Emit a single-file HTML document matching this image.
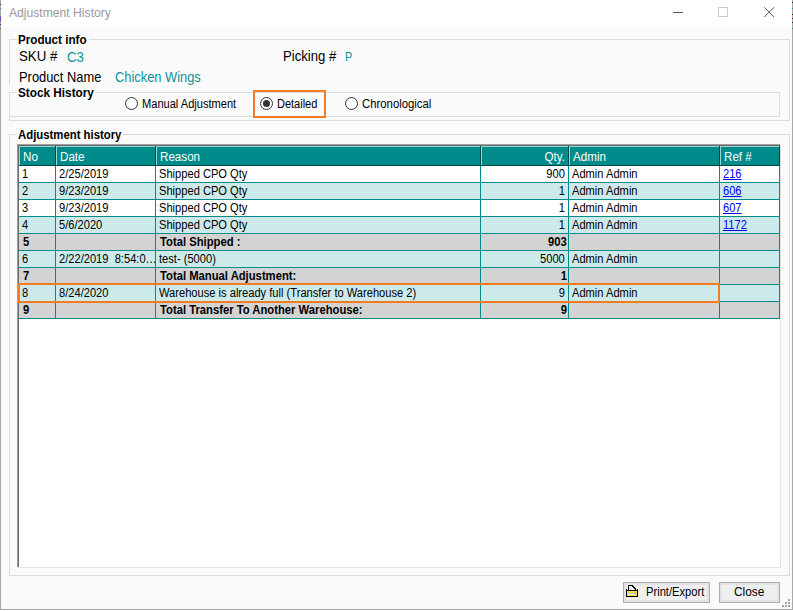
<!DOCTYPE html>
<html><head><meta charset="utf-8">
<style>
*{margin:0;padding:0;box-sizing:border-box}
html,body{width:793px;height:611px;overflow:hidden;background:#fafafa;font-family:"Liberation Sans",sans-serif;color:#000}
.a{position:absolute;white-space:nowrap}
#title{left:0;top:0;width:793px;height:28px;background:#fff}
.t{position:absolute;white-space:nowrap;line-height:1;transform-origin:0 0}
.radio{position:absolute;width:13px;height:13px;border:1px solid #333;border-radius:50%;background:#fff}
.radio.on::after{content:"";position:absolute;left:2px;top:2px;width:7px;height:7px;border-radius:50%;background:#333}
.btn{position:absolute;height:21px;background:#efefef;border:1px solid #adadad;box-shadow:inset 0 0 0 2px #e3e3e3}
.grip{position:absolute;width:2px;height:2px;background:#a8a8a8}
</style></head><body>
<div class="a" id="title"></div>
<!-- title buttons -->
<div class="a" style="left:673px;top:12px;width:10px;height:1px;background:#555"></div>
<div class="a" style="left:718px;top:7px;width:10px;height:10px;border:1px solid #ccc"></div>
<svg class="a" style="left:763px;top:6px" width="13" height="13" viewBox="0 0 13 13"><path d="M1.3 1.3L11 11M11 1.3L1.3 11" stroke="#5a5a5a" stroke-width="1" fill="none"/></svg>
<!-- window border -->
<div class="a" style="left:0;top:0;width:1px;height:610px;background:#a8a8a8"></div>
<div class="a" style="left:792px;top:0;width:1px;height:610px;background:#a8a8a8"></div>
<div class="a" style="left:0;top:610px;width:793px;height:1px;background:#fff"></div>
<div class="a" style="left:0;top:609px;width:793px;height:1px;background:#a8a8a8"></div>

<div class="a" style="left:9px;top:39px;width:8px;height:1px;background:#dcdcdc"></div><div class="a" style="left:89px;top:39px;width:701px;height:1px;background:#dcdcdc"></div><div class="a" style="left:9px;top:120px;width:781px;height:1px;background:#dcdcdc"></div><div class="a" style="left:9px;top:39px;width:1px;height:82px;background:#dcdcdc"></div><div class="a" style="left:789px;top:39px;width:1px;height:82px;background:#dcdcdc"></div><div class="a" style="left:9px;top:85px;width:771px;height:32px;background:#fafafa"></div><div class="a" style="left:9px;top:92px;width:8px;height:1px;background:#dcdcdc"></div><div class="a" style="left:96px;top:92px;width:684px;height:1px;background:#dcdcdc"></div><div class="a" style="left:9px;top:116px;width:771px;height:1px;background:#dcdcdc"></div><div class="a" style="left:9px;top:92px;width:1px;height:25px;background:#dcdcdc"></div><div class="a" style="left:779px;top:92px;width:1px;height:25px;background:#dcdcdc"></div><div class="a" style="left:9px;top:134px;width:8px;height:1px;background:#dcdcdc"></div><div class="a" style="left:123px;top:134px;width:667px;height:1px;background:#dcdcdc"></div><div class="a" style="left:9px;top:575px;width:781px;height:1px;background:#dcdcdc"></div><div class="a" style="left:9px;top:134px;width:1px;height:442px;background:#dcdcdc"></div><div class="a" style="left:789px;top:134px;width:1px;height:442px;background:#dcdcdc"></div>


<!-- Stock history group -->

<div class="radio" style="left:125px;top:97px"></div>
<div class="a" style="left:253px;top:90px;width:73px;height:28px;border:2px solid #f47b20"></div>
<div class="radio on" style="left:260px;top:97px"></div>
<div class="radio" style="left:345px;top:97px"></div>

<!-- Adjustment history group -->


<div class="a" style="left:17px;top:144px;width:764px;height:424px;background:#fff"></div>
<div class="a" style="left:17px;top:144px;width:764px;height:1px;background:#a0a0a0"></div>
<div class="a" style="left:17px;top:145px;width:763px;height:1px;background:#696969"></div>
<div class="a" style="left:17px;top:144px;width:1px;height:424px;background:#a0a0a0"></div>
<div class="a" style="left:18px;top:145px;width:1px;height:423px;background:#696969"></div>
<div class="a" style="left:780px;top:144px;width:1px;height:424px;background:#e3e3e3"></div>
<div class="a" style="left:17px;top:567px;width:764px;height:1px;background:#e3e3e3"></div>
<div class="a" style="left:19px;top:146px;width:761px;height:20px;background:#008b8b"></div>
<div class="a" style="left:19px;top:146px;width:761px;height:1px;background:#9ed6d6"></div>
<div class="a" style="left:19px;top:165px;width:761px;height:1px;background:#004848"></div>
<div class="a" style="left:19px;top:146px;width:1px;height:19px;background:#9ed6d6"></div>
<div class="a" style="left:55px;top:146px;width:1px;height:20px;background:#004848"></div>
<div class="a" style="left:56px;top:146px;width:1px;height:19px;background:#9ed6d6"></div>
<div class="a" style="left:155px;top:146px;width:1px;height:20px;background:#004848"></div>
<div class="a" style="left:156px;top:146px;width:1px;height:19px;background:#9ed6d6"></div>
<div class="a" style="left:480px;top:146px;width:1px;height:20px;background:#004848"></div>
<div class="a" style="left:481px;top:146px;width:1px;height:19px;background:#9ed6d6"></div>
<div class="a" style="left:568px;top:146px;width:1px;height:20px;background:#004848"></div>
<div class="a" style="left:569px;top:146px;width:1px;height:19px;background:#9ed6d6"></div>
<div class="a" style="left:719px;top:146px;width:1px;height:20px;background:#004848"></div>
<div class="a" style="left:720px;top:146px;width:1px;height:19px;background:#9ed6d6"></div>
<div class="a" style="left:779px;top:146px;width:1px;height:20px;background:#004848"></div>
<div class="a" style="left:19px;top:166px;width:760px;height:16px;background:#fff"></div>
<div class="a" style="left:19px;top:182px;width:761px;height:1px;background:#008b8b"></div>
<div class="a" style="left:19px;top:183px;width:760px;height:16px;background:#cdeaea"></div>
<div class="a" style="left:19px;top:199px;width:761px;height:1px;background:#008b8b"></div>
<div class="a" style="left:19px;top:200px;width:760px;height:16px;background:#fff"></div>
<div class="a" style="left:19px;top:216px;width:761px;height:1px;background:#008b8b"></div>
<div class="a" style="left:19px;top:217px;width:760px;height:16px;background:#cdeaea"></div>
<div class="a" style="left:19px;top:233px;width:761px;height:1px;background:#008b8b"></div>
<div class="a" style="left:19px;top:234px;width:760px;height:16px;background:#d3d3d3"></div>
<div class="a" style="left:19px;top:250px;width:761px;height:1px;background:#008b8b"></div>
<div class="a" style="left:19px;top:251px;width:760px;height:16px;background:#cdeaea"></div>
<div class="a" style="left:19px;top:267px;width:761px;height:1px;background:#008b8b"></div>
<div class="a" style="left:19px;top:268px;width:760px;height:16px;background:#d3d3d3"></div>
<div class="a" style="left:19px;top:284px;width:761px;height:1px;background:#008b8b"></div>
<div class="a" style="left:19px;top:285px;width:760px;height:16px;background:#cdeaea"></div>
<div class="a" style="left:19px;top:301px;width:761px;height:1px;background:#008b8b"></div>
<div class="a" style="left:19px;top:302px;width:760px;height:16px;background:#d3d3d3"></div>
<div class="a" style="left:19px;top:318px;width:761px;height:1px;background:#008b8b"></div>
<div class="a" style="left:55px;top:166px;width:1px;height:153px;background:#008b8b"></div>
<div class="a" style="left:155px;top:166px;width:1px;height:153px;background:#008b8b"></div>
<div class="a" style="left:480px;top:166px;width:1px;height:153px;background:#008b8b"></div>
<div class="a" style="left:568px;top:166px;width:1px;height:153px;background:#008b8b"></div>
<div class="a" style="left:719px;top:166px;width:1px;height:153px;background:#008b8b"></div>
<div class="a" style="left:779px;top:166px;width:1px;height:153px;background:#008b8b"></div>
<div class="t" style="left:23px;top:151px;font-size:12.5px;font-weight:normal;color:#fff;transform:scaleX(0.93);">No</div>
<div class="t" style="left:60px;top:151px;font-size:12.5px;font-weight:normal;color:#fff;transform:scaleX(0.93);">Date</div>
<div class="t" style="left:160px;top:151px;font-size:12.5px;font-weight:normal;color:#fff;transform:scaleX(0.93);">Reason</div>
<div class="t" style="right:228px;top:151px;font-size:12.5px;font-weight:normal;color:#fff;transform:scaleX(0.93);transform-origin:100% 0;">Qty.</div>
<div class="t" style="left:573px;top:151px;font-size:12.5px;font-weight:normal;color:#fff;transform:scaleX(0.93);">Admin</div>
<div class="t" style="left:724px;top:151px;font-size:12.5px;font-weight:normal;color:#fff;transform:scaleX(0.93);">Ref #</div>
<div class="t" style="left:22px;top:168px;font-size:12.5px;font-weight:normal;color:#000;transform:scaleX(0.89);">1</div>
<div class="t" style="left:59px;top:168px;font-size:12.5px;font-weight:normal;color:#000;transform:scaleX(0.89);">2/25/2019</div>
<div class="t" style="left:159px;top:168px;font-size:12.5px;font-weight:normal;color:#000;transform:scaleX(0.89);">Shipped CPO Qty</div>
<div class="t" style="right:228px;top:168px;font-size:12.5px;font-weight:normal;color:#000;transform:scaleX(0.89);transform-origin:100% 0;">900</div>
<div class="t" style="left:572px;top:168px;font-size:12.5px;font-weight:normal;color:#000;transform:scaleX(0.89);">Admin Admin</div>
<div class="t" style="left:723px;top:168px;font-size:12.5px;font-weight:normal;color:#00f;transform:scaleX(0.89);text-decoration:underline;">216</div>
<div class="t" style="left:22px;top:185px;font-size:12.5px;font-weight:normal;color:#000;transform:scaleX(0.89);">2</div>
<div class="t" style="left:59px;top:185px;font-size:12.5px;font-weight:normal;color:#000;transform:scaleX(0.89);">9/23/2019</div>
<div class="t" style="left:159px;top:185px;font-size:12.5px;font-weight:normal;color:#000;transform:scaleX(0.89);">Shipped CPO Qty</div>
<div class="t" style="right:228px;top:185px;font-size:12.5px;font-weight:normal;color:#000;transform:scaleX(0.89);transform-origin:100% 0;">1</div>
<div class="t" style="left:572px;top:185px;font-size:12.5px;font-weight:normal;color:#000;transform:scaleX(0.89);">Admin Admin</div>
<div class="t" style="left:723px;top:185px;font-size:12.5px;font-weight:normal;color:#00f;transform:scaleX(0.89);text-decoration:underline;">606</div>
<div class="t" style="left:22px;top:202px;font-size:12.5px;font-weight:normal;color:#000;transform:scaleX(0.89);">3</div>
<div class="t" style="left:59px;top:202px;font-size:12.5px;font-weight:normal;color:#000;transform:scaleX(0.89);">9/23/2019</div>
<div class="t" style="left:159px;top:202px;font-size:12.5px;font-weight:normal;color:#000;transform:scaleX(0.89);">Shipped CPO Qty</div>
<div class="t" style="right:228px;top:202px;font-size:12.5px;font-weight:normal;color:#000;transform:scaleX(0.89);transform-origin:100% 0;">1</div>
<div class="t" style="left:572px;top:202px;font-size:12.5px;font-weight:normal;color:#000;transform:scaleX(0.89);">Admin Admin</div>
<div class="t" style="left:723px;top:202px;font-size:12.5px;font-weight:normal;color:#00f;transform:scaleX(0.89);text-decoration:underline;">607</div>
<div class="t" style="left:22px;top:219px;font-size:12.5px;font-weight:normal;color:#000;transform:scaleX(0.89);">4</div>
<div class="t" style="left:59px;top:219px;font-size:12.5px;font-weight:normal;color:#000;transform:scaleX(0.89);">5/6/2020</div>
<div class="t" style="left:159px;top:219px;font-size:12.5px;font-weight:normal;color:#000;transform:scaleX(0.89);">Shipped CPO Qty</div>
<div class="t" style="right:228px;top:219px;font-size:12.5px;font-weight:normal;color:#000;transform:scaleX(0.89);transform-origin:100% 0;">1</div>
<div class="t" style="left:572px;top:219px;font-size:12.5px;font-weight:normal;color:#000;transform:scaleX(0.89);">Admin Admin</div>
<div class="t" style="left:723px;top:219px;font-size:12.5px;font-weight:normal;color:#00f;transform:scaleX(0.89);text-decoration:underline;">1172</div>
<div class="t" style="left:22.5px;top:236px;font-size:12.5px;font-weight:bold;color:#000;transform:scaleX(0.9);">5</div>
<div class="t" style="left:159.5px;top:236px;font-size:12.5px;font-weight:bold;color:#000;transform:scaleX(0.9);">Total Shipped :</div>
<div class="t" style="right:226.5px;top:236px;font-size:12.5px;font-weight:bold;color:#000;transform:scaleX(0.9);transform-origin:100% 0;">903</div>
<div class="t" style="left:22px;top:253px;font-size:12.5px;font-weight:normal;color:#000;transform:scaleX(0.89);">6</div>
<div class="t" style="left:59px;top:253px;font-size:12.5px;font-weight:normal;color:#000;transform:scaleX(0.89);">2/22/2019&nbsp; 8:54:0…</div>
<div class="t" style="left:159px;top:253px;font-size:12.5px;font-weight:normal;color:#000;transform:scaleX(0.89);">test- (5000)</div>
<div class="t" style="right:228px;top:253px;font-size:12.5px;font-weight:normal;color:#000;transform:scaleX(0.89);transform-origin:100% 0;">5000</div>
<div class="t" style="left:572px;top:253px;font-size:12.5px;font-weight:normal;color:#000;transform:scaleX(0.89);">Admin Admin</div>
<div class="t" style="left:22.5px;top:270px;font-size:12.5px;font-weight:bold;color:#000;transform:scaleX(0.9);">7</div>
<div class="t" style="left:159.5px;top:270px;font-size:12.5px;font-weight:bold;color:#000;transform:scaleX(0.9);">Total Manual Adjustment:</div>
<div class="t" style="right:226.5px;top:270px;font-size:12.5px;font-weight:bold;color:#000;transform:scaleX(0.9);transform-origin:100% 0;">1</div>
<div class="t" style="left:22px;top:287px;font-size:12.5px;font-weight:normal;color:#000;transform:scaleX(0.89);">8</div>
<div class="t" style="left:59px;top:287px;font-size:12.5px;font-weight:normal;color:#000;transform:scaleX(0.89);">8/24/2020</div>
<div class="t" style="left:159px;top:287px;font-size:12.5px;font-weight:normal;color:#000;transform:scaleX(0.89);">Warehouse is already full (Transfer to Warehouse 2)</div>
<div class="t" style="right:228px;top:287px;font-size:12.5px;font-weight:normal;color:#000;transform:scaleX(0.89);transform-origin:100% 0;">9</div>
<div class="t" style="left:572px;top:287px;font-size:12.5px;font-weight:normal;color:#000;transform:scaleX(0.89);">Admin Admin</div>
<div class="t" style="left:22.5px;top:304px;font-size:12.5px;font-weight:bold;color:#000;transform:scaleX(0.9);">9</div>
<div class="t" style="left:159.5px;top:304px;font-size:12.5px;font-weight:bold;color:#000;transform:scaleX(0.9);">Total Transfer To Another Warehouse:</div>
<div class="t" style="right:226.5px;top:304px;font-size:12.5px;font-weight:bold;color:#000;transform:scaleX(0.9);transform-origin:100% 0;">9</div>
<div class="a" style="left:18px;top:283px;width:702px;height:20px;border:2px solid #f47b20"></div>

<!-- buttons -->
<div class="btn" style="left:623px;top:582px;width:87px"></div>
<div class="btn" style="left:719px;top:582px;width:61px"></div>
<svg class="a" style="left:626px;top:585px" width="12" height="12" viewBox="0 0 12 12" shape-rendering="crispEdges">
<rect x="0" y="4" width="12" height="8" fill="#000"/>
<path d="M2 0h5v1h1v1h1v1h1v3H2z" fill="#000"/>
<path d="M3 1h3v1h1v1h1v1h1v1H3z" fill="#e8e8f8"/>
<rect x="1" y="6" width="10" height="5" fill="#ffd940"/>
<rect x="2" y="8" width="7" height="2" fill="#f8f8f8"/>
<rect x="2" y="8" width="7" height="1" fill="#c0c0d8"/>
<rect x="9" y="8" width="1" height="1" fill="#22dd22"/>
<rect x="1" y="4" width="1" height="1" fill="#ffd940"/>
<rect x="10" y="4" width="1" height="1" fill="#ffd940"/>
</svg>

<div class="grip" style="left:788px;top:599px"></div>
<div class="grip" style="left:785px;top:602px"></div>
<div class="grip" style="left:788px;top:602px"></div>
<div class="grip" style="left:782px;top:605px"></div>
<div class="grip" style="left:785px;top:605px"></div>
<div class="grip" style="left:788px;top:605px"></div>
<div class="a" style="left:792px;top:2px;width:1px;height:1px;background:#222"></div><div class="a" style="left:792px;top:8px;width:1px;height:1px;background:#2a8a8a"></div><div class="a" style="left:792px;top:14px;width:1px;height:1px;background:#222"></div><div class="a" style="left:792px;top:18px;width:1px;height:1px;background:#5a2020"></div><div class="a" style="left:792px;top:22px;width:1px;height:1px;background:#222"></div><div class="a" style="left:792px;top:28px;width:1px;height:1px;background:#2a8a8a"></div><div class="a" style="left:0px;top:4px;width:1px;height:1px;background:#2030c0"></div><div class="a" style="left:0px;top:8px;width:1px;height:1px;background:#2a8a8a"></div><div class="a" style="left:0px;top:16px;width:1px;height:6px;background:#8050c0"></div><div class="a" style="left:0px;top:24px;width:1px;height:1px;background:#2030c0"></div><div class="a" style="left:0px;top:28px;width:1px;height:1px;background:#2a8a8a"></div>
<div class="t" style="left:9px;top:7px;font-size:12.15px;font-weight:normal;color:#999;">Adjustment History</div>
<div class="t" style="left:18px;top:34px;font-size:12px;font-weight:bold;color:#000;transform:scaleX(0.97);">Product info</div>
<div class="t" style="left:18.6px;top:49px;font-size:14.5px;font-weight:normal;color:#000;transform:scaleX(0.915);">SKU #</div>
<div class="t" style="left:67px;top:50px;font-size:14.5px;font-weight:normal;color:#0a93a0;transform:scaleX(0.915);">C3</div>
<div class="t" style="left:283px;top:49px;font-size:14.5px;font-weight:normal;color:#000;transform:scaleX(0.907);">Picking #</div>
<div class="t" style="left:345px;top:51px;font-size:12px;font-weight:normal;color:#0a93a0;transform:scaleX(0.9);">P</div>
<div class="t" style="left:19px;top:70px;font-size:14.5px;font-weight:normal;color:#000;transform:scaleX(0.888);">Product Name</div>
<div class="t" style="left:115px;top:70px;font-size:14.5px;font-weight:normal;color:#0a93a0;transform:scaleX(0.887);">Chicken Wings</div>
<div class="t" style="left:18px;top:86px;font-size:13px;font-weight:bold;color:#000;transform:scaleX(0.906);">Stock History</div>
<div class="t" style="left:142px;top:98px;font-size:12.5px;font-weight:normal;color:#000;transform:scaleX(0.886);">Manual Adjustment</div>
<div class="t" style="left:277px;top:98px;font-size:12.5px;font-weight:normal;color:#000;transform:scaleX(0.88);">Detailed</div>
<div class="t" style="left:362px;top:98px;font-size:12.5px;font-weight:normal;color:#000;transform:scaleX(0.907);">Chronological</div>
<div class="t" style="left:18px;top:129px;font-size:12.5px;font-weight:bold;color:#000;transform:scaleX(0.908);">Adjustment history</div>
<div class="t" style="left:646px;top:586px;font-size:12.5px;font-weight:normal;color:#000;transform:scaleX(0.893);">Print/Export</div>
<div class="t" style="left:734px;top:586px;font-size:12.5px;font-weight:normal;color:#000;transform:scaleX(0.95);">Close</div>
</body></html>
